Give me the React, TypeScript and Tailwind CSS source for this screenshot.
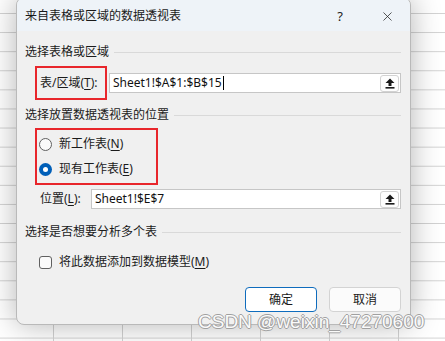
import { X } from "lucide-react";

const cjk = "font-['Segoe_UI','Noto_Sans','Noto_Sans_CJK_SC',sans-serif]";

function UploadIcon() {
  return (
    <svg width="10" height="11" viewBox="0 0 10 11">
      <path d="M5 0.5 L9.5 5 H6.5 V8 H3.5 V5 H0.5 Z" fill="#1a1a1a" />
      <rect x="0.5" y="9" width="9" height="1.6" fill="#1a1a1a" />
    </svg>
  );
}

function RefInput({ value, cursor }: { value: string; cursor?: boolean }) {
  return (
    <div className="flex h-[20px] flex-1 items-center bg-white border border-[#c6c6c6] pl-[3px] pr-[1px]">
      <span className="flex-1 text-[12px] leading-none text-[#111] font-['Noto_Sans',sans-serif] flex items-center">
        {value}
        {cursor && <span className="ml-[1px] inline-block h-[14px] w-px bg-black" />}
      </span>
      <div className="flex h-[17px] w-[19px] items-center justify-center rounded-[3px] border border-[#d2d2d2] bg-[#fdfdfd]">
        <UploadIcon />
      </div>
    </div>
  );
}

function SectionHeader({ text }: { text: string }) {
  return (
    <div className="flex h-[16px] items-center gap-[5px]">
      <span className="text-[12px] leading-none text-[#1b1b1b]">{text}</span>
      <div className="h-px flex-1 bg-[#d9d9d9]" />
    </div>
  );
}

function U({ c }: { c: string }) {
  return <span className="underline underline-offset-[2px]">{c}</span>;
}

export default function App() {
  return (
    <div
      className={`relative w-[445px] h-[341px] overflow-hidden bg-white ${cjk} bg-[linear-gradient(to_bottom,#d2d2d2_1px,transparent_1px),linear-gradient(to_right,#d2d2d2_1px,transparent_1px)] bg-[length:100%_19.1px,69px_100%] bg-[position:0_13px,53px_0]`}
    >
      {/* dialog */}
      <div className="absolute left-[16px] top-[-3px] flex w-[395px] h-[328px] flex-col overflow-hidden rounded-[8px] border border-[#b9b9b9] bg-[#f0f0f0] shadow-[0_0_30px_rgba(0,0,0,0.3)]">
        <div className="flex h-[33px] shrink-0 items-center bg-[#eef3f8] pl-[8px] pt-[3px]">
          <span className="flex-1 text-[12px] leading-none text-[#1a1a1a]">来自表格或区域的数据透视表</span>
          <span className="mr-[37px] text-[13px] leading-none text-[#222] font-['Noto_Sans',sans-serif]">?</span>
          <X size={15} strokeWidth={1.2} className="mr-[15px] text-[#222]" />
        </div>

        <div className="flex flex-1 flex-col px-[8px] pr-[9px]">
          <div className="mt-[13px]">
            <SectionHeader text="选择表格或区域" />
          </div>

          <div className="mt-[6px] flex h-[34px] items-center">
            <div className="ml-[10px] flex h-[34px] w-[72px] items-center border-2 border-[#e8262b] pl-[3px]">
              <span className="text-[12px] leading-none text-[#1b1b1b]">
                表/区域(<U c="T" />):
              </span>
            </div>
            <div className="ml-[2px] flex flex-1">
              <RefInput value="Sheet1!$A$1:$B$15" cursor />
            </div>
          </div>

          <div className="mt-[7px]">
            <SectionHeader text="选择放置数据透视表的位置" />
          </div>

          <div className="mt-[5px] ml-[10px] flex h-[57px] w-[123px] flex-col justify-center gap-[12px] border-2 border-[#e8262b] pl-[2px]">
            <div className="flex items-center gap-[7px]">
              <div className="h-[13px] w-[13px] rounded-full border border-[#606060] bg-[#fafafa]" />
              <span className="text-[12px] leading-none text-[#1b1b1b]">
                新工作表(<U c="N" />)
              </span>
            </div>
            <div className="flex items-center gap-[7px]">
              <div className="flex h-[13px] w-[13px] items-center justify-center rounded-full bg-[#005fb8]">
                <div className="h-[5px] w-[5px] rounded-full bg-white" />
              </div>
              <span className="text-[12px] leading-none text-[#1b1b1b]">
                现有工作表(<U c="E" />)
              </span>
            </div>
          </div>

          <div className="mt-[4px] flex h-[20px] items-center">
            <span className="ml-[15px] w-[51px] text-[12px] leading-none text-[#1b1b1b]">
              位置(<U c="L" />):
            </span>
            <RefInput value="Sheet1!$E$7" />
          </div>

          <div className="mt-[15px]">
            <SectionHeader text="选择是否想要分析多个表" />
          </div>

          <div className="mt-[14px] ml-[14px] flex h-[16px] items-center gap-[7px]">
            <div className="h-[13px] w-[13px] rounded-[3px] border border-[#606060] bg-[#fafafa]" />
            <span className="text-[12px] leading-none text-[#1b1b1b]">
              将此数据添加到数据模型(<U c="M" />)
            </span>
          </div>

          <div className="mt-[17px] flex justify-end gap-[12px]">
            <button className="h-[25px] w-[72px] rounded-[4px] border border-[#0f6cbd] bg-white text-[12px] text-[#1a1a1a]">
              确定
            </button>
            <button className="h-[25px] w-[72px] rounded-[4px] border border-[#d3d3d3] bg-[#fbfbfb] text-[12px] text-[#1a1a1a]">
              取消
            </button>
          </div>
        </div>
      </div>

      {/* watermark */}
      <div className="absolute left-[198px] top-[312px] text-[19px] leading-none text-[#fafafa] font-['Liberation_Sans',sans-serif] [text-shadow:1px_0_#a0a0a0,-1px_0_#a0a0a0,0_1px_#a0a0a0,0_-1px_#a0a0a0]">
        CSDN @weixin_47270600
      </div>
    </div>
  );
}
